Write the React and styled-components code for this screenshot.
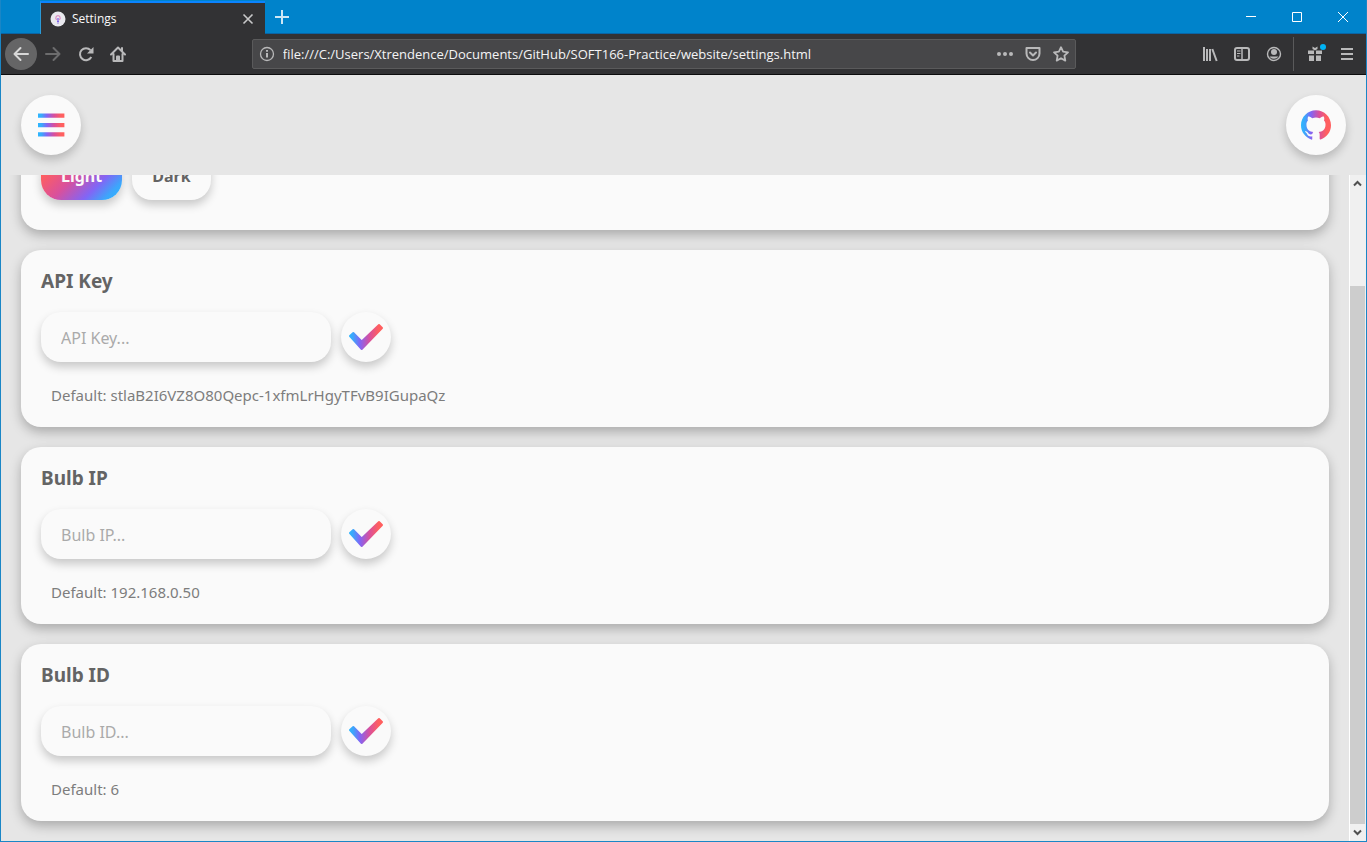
import React from "react";
import styled, { createGlobalStyle, css } from "styled-components";

const uiFont = '"Open Sans", "Noto Sans", sans-serif';
const pageFont = '"Noto Sans", "DejaVu Sans Condensed", sans-serif';

const GlobalStyle = createGlobalStyle`
  * { box-sizing: border-box; }
  body { margin: 0; font-family: ${pageFont}; }
  button, input { font-family: inherit; margin: 0; }
  button { border: 0; padding: 0; background: none; color: inherit; cursor: pointer; }
  svg { display: block; flex: none; }
  h2, p { margin: 0; }
`;

const Window = styled.div`
  display: flex;
  flex-direction: column;
  height: 100vh;
  overflow: hidden;
  border: solid #1a86c6;
  border-width: 0 1px 1px;
  background: #e6e6e6;
`;

const TitleBar = styled.div`
  display: flex;
  flex: none;
  height: 34px;
  padding-left: 39px;
  background: #0083cb;
  border-bottom: 1px solid #0a64a4;
  font-family: ${uiFont};
`;

const Tab = styled.div`
  display: flex;
  align-items: center;
  width: 225px;
  height: 33px;
  margin-top: 1px;
  padding: 0 9px;
  gap: 6px;
  background: #323234;
  border-top: 2px solid #0a84ff;
  border-left: 1px solid #2a9ad8;
  color: #f9f9fa;
  font-size: 12px;
`;

const TabTitle = styled.span`
  flex: 1;
`;

const NewTab = styled.button`
  display: grid;
  place-items: center;
  width: 34px;
`;

const WindowControls = styled.div`
  display: flex;
  margin-left: auto;
`;

const WindowButton = styled.button`
  display: grid;
  place-items: center;
  width: 46px;
`;

const Toolbar = styled.div`
  display: flex;
  flex: none;
  align-items: center;
  height: 41px;
  padding: 0 3px 0 4px;
  background: #323234;
  border-bottom: 1px solid #0c0c0d;
  color: #b9b9ba;
  font-family: ${uiFont};
`;

const ToolButton = styled.button`
  position: relative;
  display: grid;
  place-items: center;
  width: 32px;
  height: 32px;
  border-radius: 50%;
  ${(p) => p.$round && css`
    background: #656566;
    color: #d8d8d8;
  `}
  ${(p) => p.$dim && css`
    color: #6c6c6d;
  `}
`;

const NoticeDot = styled.span`
  position: absolute;
  top: 6px;
  right: 5px;
  width: 6px;
  height: 6px;
  border-radius: 50%;
  background: #00b3f4;
`;

const NavButtons = styled.div`
  display: flex;
  margin-right: 1px;
`;

const Spring = styled.div`
  flex: 118;
`;

const Separator = styled.span`
  width: 1px;
  height: 34px;
  margin: 0 5px 0 3px;
  background: #5a5a5b;
`;

const AddressBar = styled.div`
  display: flex;
  flex: 812;
  align-items: center;
  height: 30px;
  padding: 0 6px;
  background: #474749;
  border: 1px solid #5a5a5b;
  border-radius: 2px;
`;

const AddressInput = styled.input`
  flex: 1;
  min-width: 0;
  padding: 0 8px;
  border: 0;
  outline: 0;
  background: none;
  color: #f4f4f5;
  font-size: 13px;
`;

const AddressActions = styled.div`
  display: flex;
  gap: 12px;
`;

const PageHeader = styled.header`
  display: flex;
  flex: none;
  justify-content: space-between;
  padding: 20px;
`;

const raised = css`
  background: #fafafa;
  box-shadow: 0 5px 10px rgba(0, 0, 0, 0.2);
`;

const CircleButton = styled.button`
  display: grid;
  flex: none;
  place-items: center;
  width: ${(p) => p.$size}px;
  height: ${(p) => p.$size}px;
  border-radius: 50%;
  ${raised}
`;

const Viewport = styled.div`
  display: flex;
  flex: 1;
  min-height: 0;
`;

const Content = styled.main`
  display: flex;
  flex: 1;
  flex-direction: column;
  justify-content: flex-end;
  gap: 20px;
  overflow: hidden;
  padding: 20px;
`;

const Card = styled.section`
  display: flex;
  flex: none;
  flex-direction: column;
  gap: 20px;
  padding: 20px 20px 18px;
  border-radius: 20px;
  background: #fafafa;
  box-shadow: 0 5px 12px rgba(0, 0, 0, 0.26);
`;

const CardTitle = styled.h2`
  color: #646464;
  font-size: 19px;
  font-weight: 700;
  line-height: 22px;
`;

const Row = styled.div`
  display: flex;
  gap: 10px;
`;

const ThemeRow = styled(Row)`
  padding-bottom: 12px;
`;

const ThemeButton = styled.button`
  height: 50px;
  padding: 2px 20px 0;
  border-radius: 20px;
  font-size: 16px;
  font-weight: 700;
  color: #646464;
  ${raised}
  ${(p) => p.$active && css`
    color: #fafafa;
    background: linear-gradient(135deg, #ff5f5f 20%, #d9509c 46%, #8265f5 70%, #3ca6fb 86%, #2bb8ff 100%);
  `}
`;

const TextField = styled.input`
  width: 290px;
  height: 50px;
  padding: 2px 20px 0;
  border: 0;
  outline: 0;
  border-radius: 20px;
  font-size: 16px;
  color: #646464;
  ${raised}
  &::placeholder { color: #aaaaaa; opacity: 1; }
`;

const DefaultText = styled.p`
  padding: 0 10px;
  color: #7d7d7d;
  font-size: 15px;
  line-height: 27px;
`;

const ScrollBar = styled.div`
  display: flex;
  flex: none;
  flex-direction: column;
  width: 17px;
  padding-right: 1px;
  background: #f0f0f0;
  border-left: 1px solid #ffffff;
`;

const ScrollArrow = styled.button`
  display: grid;
  flex: none;
  place-items: center;
  height: 17px;
`;

const TrackGap = styled.div`
  flex: 94;
`;

const Thumb = styled.div`
  flex: 538;
  background: #cdcdcd;
`;

const Stroke = ({ size = 16, width = 2, children, ...rest }) => (
  <svg width={size} height={size} viewBox={`0 0 ${size} ${size}`} fill="none" stroke="currentColor" strokeWidth={width} aria-hidden="true" {...rest}>
    {children}
  </svg>
);

const Spectrum = ({ id, x1, x2 }) => (
  <linearGradient id={id} gradientUnits="userSpaceOnUse" x1={x1} y1="0" x2={x2} y2="0">
    <stop offset="0" stopColor="#2bb8ff" />
    <stop offset="0.14" stopColor="#3ca6fb" />
    <stop offset="0.33" stopColor="#8265f5" />
    <stop offset="0.6" stopColor="#d9509c" />
    <stop offset="0.85" stopColor="#ff5f5f" />
  </linearGradient>
);

const Favicon = () => (
  <svg width="16" height="16" viewBox="0 0 16 16" aria-hidden="true">
    <circle cx="8" cy="8" r="7.5" fill="#e9e9ee" />
    <path d="M6.9 8.800C5.7 8 5.600 6.800 6 5.900c.8-1.700 3.200-1.700 4 0 .4.9.3 2.100-.9 2.900" fill="none" stroke="#dd8fc4" strokeWidth="1.200" />
    <path d="M8 7v3M7 10.500h2M7.300 12h1.400" stroke="#7b62e8" strokeWidth="1.200" fill="none" />
  </svg>
);

const CheckIcon = () => (
  <svg width="36" height="36" viewBox="0 0 36 36" aria-hidden="true">
    <defs><Spectrum id="checkFill" x1="0" x2="36" /></defs>
    <path
      d="M2 17L5.300 14 13.700 22.500 31 6 34 9 13.700 30z"
      fill="url(#checkFill)"
      stroke="url(#checkFill)"
      strokeWidth="2"
      strokeLinejoin="round"
    />
  </svg>
);

const MenuIcon = () => (
  <svg width="30" height="30" viewBox="0 0 30 30" aria-hidden="true">
    <defs><Spectrum id="menuFill" x1="2" x2="29" /></defs>
    <path d="M2 3.400h26.400v4.400H2zM2 13h26.400v4.200H2zM2 22.200h26.400v4.400H2z" fill="url(#menuFill)" />
  </svg>
);

const GithubIcon = () => (
  <svg width="30" height="30" viewBox="0 0 24 24" aria-hidden="true">
    <defs><Spectrum id="githubFill" x1="0" x2="24" /></defs>
    <path
      fill="url(#githubFill)"
      d="M12 .297c-6.630 0-12 5.373-12 12 0 5.303 3.438 9.800 8.205 11.385.6.113.82-.258.82-.577 0-.285-.01-1.040-.015-2.040-3.338.724-4.042-1.610-4.042-1.610C4.422 18.070 3.633 17.700 3.633 17.700c-1.087-.744.084-.729.084-.729 1.205.084 1.838 1.236 1.838 1.236 1.070 1.835 2.809 1.305 3.495.998.108-.776.417-1.305.76-1.605-2.665-.3-5.466-1.332-5.466-5.930 0-1.310.465-2.380 1.235-3.220-.135-.303-.54-1.523.105-3.176 0 0 1.005-.322 3.300 1.230.96-.267 1.980-.399 3-.405 1.020.006 2.040.138 3 .405 2.280-1.552 3.285-1.230 3.285-1.230.645 1.653.24 2.873.12 3.176.765.84 1.230 1.910 1.230 3.220 0 4.610-2.805 5.625-5.475 5.920.42.36.81 1.096.81 2.220 0 1.606-.015 2.896-.015 3.286 0 .315.21.69.825.57C20.565 22.092 24 17.592 24 12.297c0-6.627-5.373-12-12-12"
    />
  </svg>
);

const settings = [
  { id: "api-key", label: "API Key", value: "stlaB2I6VZ8O80Qepc-1xfmLrHgyTFvB9IGupaQz" },
  { id: "bulb-ip", label: "Bulb IP", value: "192.168.0.50" },
  { id: "bulb-id", label: "Bulb ID", value: "6" },
];

function BrowserChrome() {
  return (
    <>
      <TitleBar>
        <Tab>
          <Favicon />
          <TabTitle>Settings</TabTitle>
          <button aria-label="Close tab">
            <Stroke size={16} width={1.6} color="#c8c8c9"><path d="M3.500 3.500l9 9M12.500 3.500l-9 9" /></Stroke>
          </button>
        </Tab>
        <NewTab aria-label="New tab">
          <Stroke color="#cfe7f5"><path d="M8 1v14M1 8h14" /></Stroke>
        </NewTab>
        <WindowControls>
          <WindowButton aria-label="Minimize">
            <Stroke size={12} width={1} color="#fff"><path d="M1 5.500h10" /></Stroke>
          </WindowButton>
          <WindowButton aria-label="Maximize">
            <Stroke size={12} width={1} color="#fff"><path d="M1.500 1.500h9v9h-9z" /></Stroke>
          </WindowButton>
          <WindowButton aria-label="Close">
            <Stroke size={12} width={1} color="#fff"><path d="M1 1l10 10M11 1L1 11" /></Stroke>
          </WindowButton>
        </WindowControls>
      </TitleBar>
      <Toolbar>
        <NavButtons>
          <ToolButton $round aria-label="Back">
            <Stroke strokeLinecap="round" strokeLinejoin="round"><path d="M15 8H1.500M7.500 2L1.500 8l6 6" /></Stroke>
          </ToolButton>
          <ToolButton $dim aria-label="Forward">
            <Stroke strokeLinecap="round" strokeLinejoin="round"><path d="M1 8h13.500M8.500 2l6 6-6 6" /></Stroke>
          </ToolButton>
        </NavButtons>
        <ToolButton aria-label="Reload">
          <Stroke><path d="M13.300 11A6 6 0 1 1 12.500 4.200" /><path d="M15.500 1v6.500H9z" fill="currentColor" stroke="none" /></Stroke>
        </ToolButton>
        <ToolButton aria-label="Home">
          <Stroke strokeLinejoin="round" strokeLinecap="round"><path d="M1 8.500L8 1.500l7 7M3.500 8v7h9V8" /><path d="M7 15v-4.500h2V15" /><path d="M12 2v3" /></Stroke>
        </ToolButton>
        <Spring />
        <AddressBar>
          <Stroke width={1.3}><circle cx="8" cy="8" r="6.500" /><path d="M8 7v4.500M8 4v1.800" strokeWidth="2" /></Stroke>
          <AddressInput
            aria-label="Address"
            readOnly
            value="file:///C:/Users/Xtrendence/Documents/GitHub/SOFT166-Practice/website/settings.html"
          />
          <AddressActions>
            <button aria-label="Page actions">
              <Stroke><g fill="currentColor" stroke="none"><circle cx="2" cy="8" r="2" /><circle cx="8" cy="8" r="2" /><circle cx="14" cy="8" r="2" /></g></Stroke>
            </button>
            <button aria-label="Save to Pocket">
              <Stroke strokeLinecap="round" strokeLinejoin="round"><path d="M1.500 2h13v5.500a6.500 6.500 0 0 1-13 0z" /><path d="M5 6.500l3 3 3-3" /></Stroke>
            </button>
            <button aria-label="Bookmark this page">
              <Stroke width={1.8} strokeLinejoin="round"><path d="M8 1.200l2.100 4.500 4.900.6-3.600 3.400.9 4.900L8 12.200l-4.300 2.400.9-4.900L1 6.300l4.900-.6z" /></Stroke>
            </button>
          </AddressActions>
        </AddressBar>
        <Spring />
        <ToolButton aria-label="Library">
          <Stroke><path d="M2 1v14M5 3v12M8 3v12M10.300 3l4.400 12" /></Stroke>
        </ToolButton>
        <ToolButton aria-label="Sidebars">
          <Stroke><rect x="1" y="2" width="14" height="12" rx="2" /><path d="M8 2v12" strokeWidth="1.500" /><path d="M3 5h3.500M3 7.500h3.500M3 10h2.500" strokeWidth="1" /></Stroke>
        </ToolButton>
        <ToolButton aria-label="Account">
          <Stroke width={1.4}><circle cx="8" cy="8" r="6.500" /><circle cx="8" cy="6" r="3" fill="currentColor" stroke="none" /><path d="M3.500 10.500h9A5.500 5.500 0 0 1 3.500 10.500z" fill="currentColor" stroke="none" /></Stroke>
        </ToolButton>
        <Separator />
        <ToolButton aria-label="What's new">
          <Stroke><path d="M1 4.500h6v3.500H1zM9 4.500h6v3.500H9zM2 9.500h5V15H2zM9 9.500h5V15H9zM5.500 0.500L8 2l2.500-1.500v2.500L8 4.500 5.500 3z" fill="currentColor" stroke="none" /></Stroke>
          <NoticeDot />
        </ToolButton>
        <ToolButton aria-label="Open menu">
          <Stroke><path d="M2 3h12M2 8h12M2 13h12" /></Stroke>
        </ToolButton>
      </Toolbar>
    </>
  );
}

function SettingCard({ id, label, value }) {
  return (
    <Card>
      <CardTitle><label htmlFor={id}>{label}</label></CardTitle>
      <Row>
        <TextField id={id} type="text" placeholder={`${label}...`} />
        <CircleButton $size={50} aria-label={`Save ${label}`}><CheckIcon /></CircleButton>
      </Row>
      <DefaultText>Default: {value}</DefaultText>
    </Card>
  );
}

export default function App() {
  return (
    <Window>
      <GlobalStyle />
      <BrowserChrome />
      <PageHeader>
        <CircleButton $size={60} aria-label="Menu"><MenuIcon /></CircleButton>
        <CircleButton $size={60} aria-label="GitHub"><GithubIcon /></CircleButton>
      </PageHeader>
      <Viewport>
        <Content>
          <Card aria-label="Theme">
            <ThemeRow>
              <ThemeButton $active>Light</ThemeButton>
              <ThemeButton>Dark</ThemeButton>
            </ThemeRow>
          </Card>
          {settings.map((s) => <SettingCard key={s.id} {...s} />)}
        </Content>
        <ScrollBar>
          <ScrollArrow aria-label="Scroll up">
            <Stroke size={9} color="#505050"><path d="M1 6.500L4.500 3 8 6.500" /></Stroke>
          </ScrollArrow>
          <TrackGap />
          <Thumb />
          <ScrollArrow aria-label="Scroll down">
            <Stroke size={9} color="#505050"><path d="M1 2.500L4.500 6 8 2.500" /></Stroke>
          </ScrollArrow>
        </ScrollBar>
      </Viewport>
    </Window>
  );
}
